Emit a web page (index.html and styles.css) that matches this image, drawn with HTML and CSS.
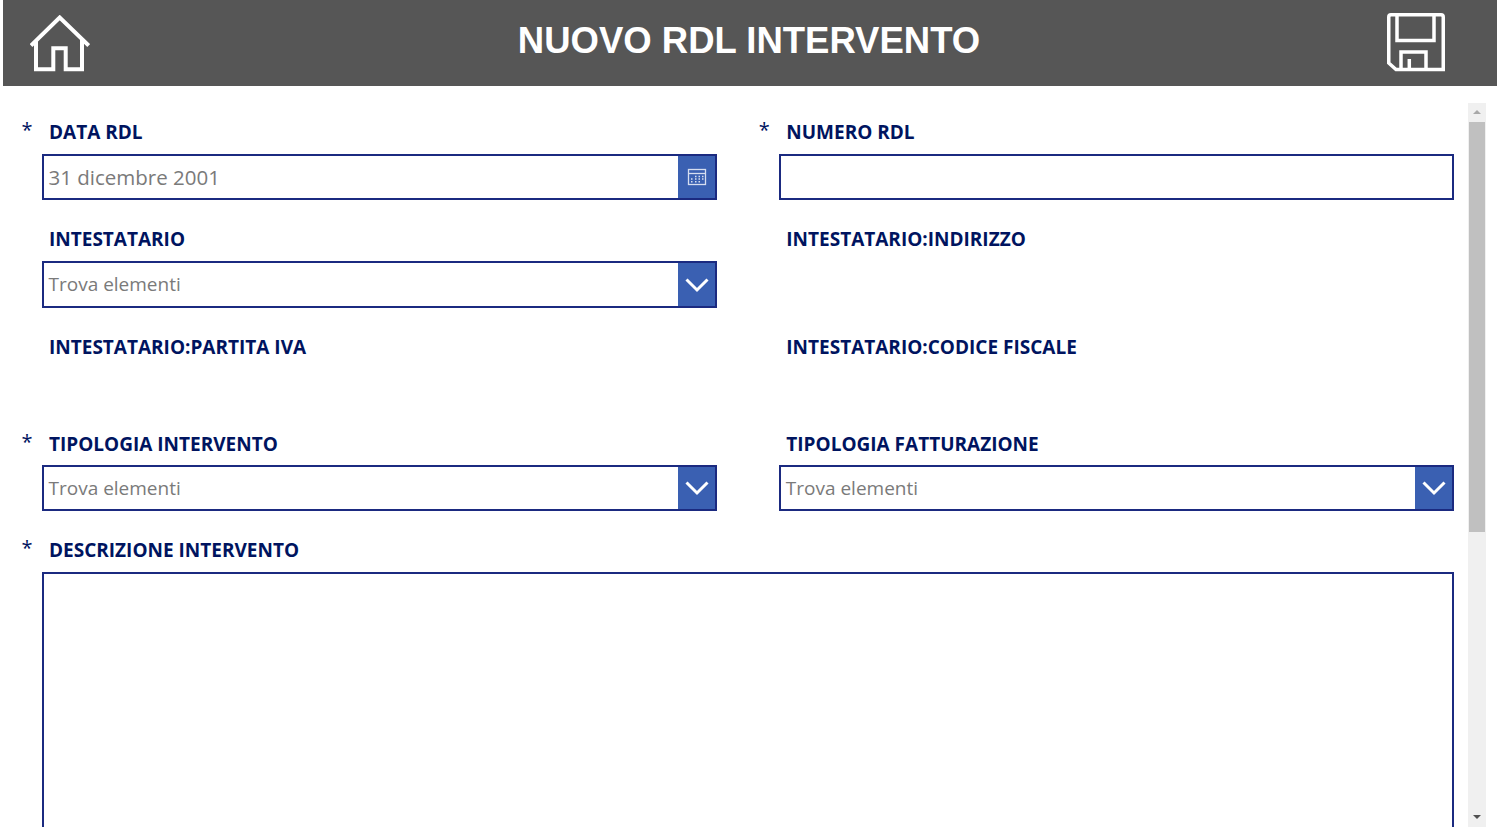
FILE: index.html
```html
<!DOCTYPE html>
<html lang="it">
<head>
<meta charset="utf-8">
<title>Nuovo RDL Intervento</title>
<link rel="stylesheet" href="styles.css">
</head>
<body>
<div class="app">
  <header class="header">
    <svg class="home-icon" width="60" height="57" viewBox="0 0 60 57" fill="none" stroke="#fff" stroke-width="4">
      <path d="M1 30.500 L29.700 2.500 L58.700 30.500"/>
      <path d="M6 25 V54.300 H23.300 V33.300 H35.700 V54.300 H52 V25"/>
    </svg>
    <h1 class="title">NUOVO RDL INTERVENTO</h1>
    <svg class="save-icon" width="58" height="59" viewBox="0 0 58 59" fill="none" stroke="#fff" stroke-width="3.500">
      <path d="M4 1.750 H54 Q56.250 1.750 56.250 4 V56.500 H9 L1.750 50 V4 Q1.750 1.750 4 1.750 Z"/>
      <path d="M10 2 V27.500 H47 V2"/>
      <path d="M14 56 V39 H39 V56"/>
      <path d="M22.300 46 V56"/>
    </svg>
  </header>
  <main class="content">
    <form class="form">
      <div class="field">
        <label class="label required">DATA RDL</label>
        <div class="input">
          <span class="value value-date">31 dicembre 2001</span>
          <span class="btn">
            <svg width="20" height="20" viewBox="0 0 20 20" fill="none" stroke="#d6def0" stroke-width="1.300">
              <rect x="1.500" y="2.500" width="17" height="15"/>
              <path d="M1.500 6.500 H18.500"/>
              <path d="M8 9.500h1.500M11.500 9.500h1.500M15 9.500h1.500M4 12h1.500M8 12h1.500M11.500 12h1.500M15 12h1.500M4 14.800h1.500M8 14.800h1.500M11.500 14.800h1.500" stroke-width="1.500"/>
            </svg>
          </span>
        </div>
      </div>
      <div class="field">
        <label class="label required">NUMERO RDL</label>
        <div class="input"></div>
      </div>
      <div class="field">
        <label class="label">INTESTATARIO</label>
        <div class="input input-tall">
          <span class="value value-raised">Trova elementi</span>
          <span class="btn">
            <svg width="24" height="16" viewBox="0 0 24 16" fill="none" stroke="#fff" stroke-width="3"><path d="M1.500 2.500 L12 13 L22.500 2.500"/></svg>
          </span>
        </div>
      </div>
      <div class="field">
        <label class="label">INTESTATARIO:INDIRIZZO</label>
      </div>
      <div class="field">
        <label class="label">INTESTATARIO:PARTITA IVA</label>
      </div>
      <div class="field">
        <label class="label">INTESTATARIO:CODICE FISCALE</label>
      </div>
      <div class="field field-tight">
        <label class="label required">TIPOLOGIA INTERVENTO</label>
        <div class="input">
          <span class="value">Trova elementi</span>
          <span class="btn">
            <svg width="24" height="16" viewBox="0 0 24 16" fill="none" stroke="#fff" stroke-width="3"><path d="M1.500 2.500 L12 13 L22.500 2.500"/></svg>
          </span>
        </div>
      </div>
      <div class="field field-tight">
        <label class="label">TIPOLOGIA FATTURAZIONE</label>
        <div class="input">
          <span class="value">Trova elementi</span>
          <span class="btn">
            <svg width="24" height="16" viewBox="0 0 24 16" fill="none" stroke="#fff" stroke-width="3"><path d="M1.500 2.500 L12 13 L22.500 2.500"/></svg>
          </span>
        </div>
      </div>
      <div class="field field-wide">
        <label class="label required">DESCRIZIONE INTERVENTO</label>
        <div class="textarea"></div>
      </div>
    </form>
    <div class="scrollbar">
      <span class="arrow arrow-up"></span>
      <span class="track"><span class="thumb"></span></span>
      <span class="arrow arrow-down"></span>
    </div>
  </main>
</div>
</body>
</html>
```
FILE: styles.css
```css
* { box-sizing: border-box; }
html, body { margin: 0; padding: 0; background: #fff; }
body { width: 1497px; height: 840px; overflow: hidden; font-family: "Open Sans", sans-serif; }
.app { display: flex; flex-direction: column; height: 827px; }
.header {
  height: 86px;
  margin-left: 3px;
  background: #565656;
  display: grid;
  grid-template-columns: 1fr auto 1fr;
  align-items: center;
  padding: 0 27px;
  flex: none;
}
.home-icon { display: block; margin: 1px 0 0 -0.500px; }
.save-icon { display: block; justify-self: end; margin: -1px 25.500px 0 0; }
.title {
  margin: -4px 2px 0 0;
  font-family: "Liberation Sans", Arial, sans-serif;
  font-weight: 700;
  font-size: 36.500px;
  line-height: 44px;
  color: #fff;
}
.content { flex: 1; min-height: 0; display: flex; overflow: hidden; padding: 17px 11px 0 0; }
.form {
  flex: 1;
  min-width: 0;
  padding: 18px 14px 0 42px;
  display: grid;
  grid-template-columns: 674.500px 674.500px;
  column-gap: 62.800px;
  grid-template-rows: 107px 108px 97px 106px 300px;
  overflow: hidden;
  height: 800px;
}
.field { display: flex; flex-direction: column; gap: 11px; min-width: 0; }
.field-tight { gap: 10px; }
.field-wide { grid-column: 1 / 3; }
.label {
  position: relative;
  display: block;
  padding-left: 7px;
  font-weight: 700;
  font-size: 19px;
  line-height: 22px;
  height: 22px;
  color: #00145f;
}
.required::before {
  content: "*";
  position: absolute;
  left: -20.500px;
  top: -2px;
  font-weight: 400;
  font-size: 20px;
  color: #00145f;
}
.input {
  height: 46px;
  border: 2px solid #1b2a80;
  display: flex;
  align-items: stretch;
  justify-content: flex-end;
  background: #fff;
  position: relative;
}
.input-tall { height: 47px; }
.value {
  flex: 1;
  padding-left: 4.500px;
  align-self: center;
  font-size: 19px;
  line-height: 28px;
  color: #7a7a7a;
}
.value-raised { padding-bottom: 2px; }
.value-date { font-size: 20.500px; }
.btn {
  width: 37px;
  padding-left: 1px;
  background: #3a60b2;
  display: flex;
  align-items: center;
  justify-content: center;
  flex: none;
}
.textarea { height: 300px; border: 2px solid #1b2a80; }
.scrollbar {
  width: 18px;
  flex: none;
  background: #f0f0f0;
  display: flex;
  flex-direction: column;
  align-items: center;
}
.track { flex: 1; width: 16px; display: block; }
.thumb { display: block; width: 16px; height: 410px; background: #c0c0c0; }
.arrow { flex: none; width: 18px; height: 19px; position: relative; display: block; }
.arrow::after {
  content: "";
  position: absolute;
  left: 5px;
  width: 0;
  height: 0;
  border-left: 4px solid transparent;
  border-right: 4px solid transparent;
}
.arrow-up::after { top: 7px; border-bottom: 4px solid #a8a8a8; }
.arrow-down::after { top: 7px; border-top: 4px solid #505050; }
```
